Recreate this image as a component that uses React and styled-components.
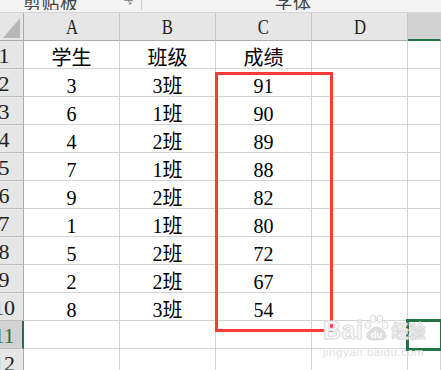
import React from "react";
import styled, { createGlobalStyle } from "styled-components";

const Global = createGlobalStyle`
  html, body { margin: 0; padding: 0; background: #fff; overflow: hidden; }
  body { width: 441px; height: 370px; }
`;

const Page = styled.div`
  width: 441px;
  height: 370px;
  overflow: hidden;
  display: flex;
  flex-direction: column;
`;

const Ribbon = styled.div`
  height: 12px;
  flex: none;
  background: #f3f3f3;
  border-bottom: 1px solid #d6d6d6;
  display: flex;
  overflow: hidden;
`;

const RibbonGroup = styled.div`
  width: ${(p) => p.$w}px;
  flex: none;
  display: flex;
  align-items: flex-end;
  justify-content: ${(p) => (p.$center ? "center" : "flex-start")};
  padding-left: ${(p) => p.$pl || 0}px;
  box-sizing: border-box;
  border-right: ${(p) => (p.$sep ? "1px solid #c9c9c9" : "none")};
  height: 10px;
  position: relative;
  overflow: hidden;
`;

const RibbonLabel = styled.span`
  font-family: "Noto Sans CJK SC", "Liberation Sans", sans-serif;
  font-size: 18px;
  line-height: 18px;
  color: #444;
  margin-bottom: -1px;
  letter-spacing: 0.5px;
`;

const Launcher = styled.svg`
  position: absolute;
  right: 8px;
  top: 0;
`;

const Sheet = styled.div`
  position: relative;
  flex: 1;
`;

const Grid = styled.div`
  display: grid;
  grid-template-columns: 24px 96px 96px 96px 96px 1fr;
  grid-auto-rows: 28px;
`;

const Corner = styled.div`
  background: #e6e6e6;
  border-right: 1px solid #ababab;
  border-bottom: 1px solid #ababab;
  box-sizing: border-box;
  display: flex;
  align-items: flex-end;
  justify-content: flex-end;
  padding: 0 3px 2px 0;
`;

const ColHead = styled.div`
  background: ${(p) => (p.$active ? "#d2d2d2" : "#e6e6e6")};
  border-right: 1px solid ${(p) => (p.$active ? "#d2d2d2" : "#c4c4c4")};
  border-bottom: ${(p) => (p.$active ? "2px solid #217346" : "1px solid #ababab")};
  box-sizing: border-box;
  display: flex;
  align-items: flex-end;
  justify-content: center;
  overflow: hidden;
`;

const ColLetter = styled.span`
  display: inline-block;
  font-family: "Liberation Serif", serif;
  font-size: 22px;
  line-height: 22px;
  color: #222;
  transform: scaleX(0.76);
  margin-bottom: 2px;
`;

const RowHead = styled.div`
  background: ${(p) => (p.$active ? "#d2d2d2" : "#e6e6e6")};
  border-right: ${(p) => (p.$active ? "2px solid #217346" : "1px solid #ababab")};
  border-bottom: 1px solid #bdbdbd;
  box-sizing: border-box;
  display: flex;
  align-items: flex-end;
  overflow: hidden;
  color: ${(p) => (p.$active ? "#217346" : "#222")};
`;

const RowNum = styled.span`
  flex: none;
  width: 38px;
  margin-left: -15px;
  text-align: center;
  font-family: "Liberation Serif", serif;
  font-size: 22px;
  line-height: 22px;
  margin-bottom: 1px;
`;

const Cell = styled.div`
  background: #fff;
  border-right: 1px solid #d4d4d4;
  border-bottom: 1px solid #d4d4d4;
  box-sizing: border-box;
  display: flex;
  align-items: flex-end;
  justify-content: center;
  font-family: "Liberation Serif", "Noto Sans CJK SC", serif;
  font-size: 20px;
  line-height: 20px;
  color: #000;
  position: relative;
  outline: ${(p) => (p.$selected ? "3px solid #217346" : "none")};
  outline-offset: -1px;
  z-index: ${(p) => (p.$selected ? 2 : "auto")};
`;

const RedBox = styled.div`
  position: absolute;
  left: 215px;
  top: 59px;
  width: 118px;
  height: 260px;
  border: 3px solid #fd3a3a;
  box-sizing: border-box;
  z-index: 3;
  pointer-events: none;
`;

const Watermark = styled.div`
  position: absolute;
  left: 323px;
  top: 301px;
  z-index: 4;
  display: flex;
  flex-direction: column;
  align-items: flex-start;
  pointer-events: none;
  font-family: "Liberation Sans", Arial, sans-serif;
`;

const MarkTop = styled.div`
  display: flex;
  align-items: flex-end;
  gap: 1px;
`;

const MarkWord = styled.span`
  font-size: 25px;
  font-weight: bold;
  line-height: 22px;
  color: #fbfbfb;
  -webkit-text-stroke: 1px #dadada;
  letter-spacing: ${(p) => p.$ls || 0}px;
`;

const MarkCjk = styled(MarkWord)`
  font-family: "Noto Sans CJK SC", sans-serif;
  font-size: 17px;
  line-height: 20px;
  margin-left: 1px;
  display: inline-block;
  transform: scaleY(1.1);
  transform-origin: bottom;
`;

const MarkUrl = styled.span`
  font-size: 11.5px;
  line-height: 12px;
  margin-top: 5px;
  margin-left: 0;
  color: #e0e0e0;
  letter-spacing: 0.5px;
`;

const rows = [
  ["学生", "班级", "成绩"],
  ["3", "3班", "91"],
  ["6", "1班", "90"],
  ["4", "2班", "89"],
  ["7", "1班", "88"],
  ["9", "2班", "82"],
  ["1", "1班", "80"],
  ["5", "2班", "72"],
  ["2", "2班", "67"],
  ["8", "3班", "54"],
  ["", "", ""],
  ["", "", ""],
  ["", "", ""],
];

function Paw() {
  return (
    <svg width="25" height="27" viewBox="0 0 26 27">
      <g fill="#fbfbfb" stroke="#d9d9d9" strokeWidth="1">
        <ellipse cx="4" cy="11" rx="3" ry="3.6" />
        <ellipse cx="9.5" cy="4.5" rx="3" ry="3.8" />
        <ellipse cx="16.5" cy="4.5" rx="3" ry="3.8" />
        <ellipse cx="22" cy="11" rx="3" ry="3.6" />
        <path d="M13 13 C8 13 3 19 3 22.5 C3 25.5 6 26.5 13 26.5 C20 26.5 23 25.5 23 22.5 C23 19 18 13 13 13 Z" fill="#dedede" />
      </g>
      <text x="13" y="24.5" textAnchor="middle" fontFamily="Liberation Sans, sans-serif" fontWeight="bold" fontSize="10" fill="#ffffff">du</text>
    </svg>
  );
}

export default function App() {
  return (
    <Page>
      <Global />
      <Ribbon>
        <RibbonGroup $w={142} $pl={23} $sep>
          <RibbonLabel>剪贴板</RibbonLabel>
          <Launcher width="9" height="6" viewBox="0 0 9 6">
            <path d="M0.5 0 V0.5 H8.5 V0" fill="none" stroke="#8a8a8a" strokeWidth="1" />
            <path d="M3 0 L7 4 M7 1.5 V4 H4.5" fill="none" stroke="#8a8a8a" strokeWidth="1" />
          </Launcher>
        </RibbonGroup>
        <RibbonGroup $w={302} $center>
          <RibbonLabel>字体</RibbonLabel>
        </RibbonGroup>
      </Ribbon>
      <Sheet>
        <Grid>
          <Corner>
            <svg width="17" height="20" viewBox="0 0 17 20">
              <path d="M0 20 L17 20 L17 0 Z" fill="#b7b7b7" />
            </svg>
          </Corner>
          {["A", "B", "C", "D", ""].map((c, i) => (
            <ColHead key={i} $active={i === 4}>
              <ColLetter>{c}</ColLetter>
            </ColHead>
          ))}
          {rows.map((r, ri) => (
            <React.Fragment key={ri}>
              <RowHead $active={ri === 10}>
                <RowNum>{ri + 1}</RowNum>
              </RowHead>
              {r.map((v, ci) => (
                <Cell key={ci}>{v}</Cell>
              ))}
              <Cell />
              <Cell $selected={ri === 10} />
            </React.Fragment>
          ))}
        </Grid>
        <RedBox />
        <Watermark>
          <MarkTop>
            <MarkWord $ls={0.5}>Bai</MarkWord>
            <Paw />
            <MarkCjk>经验</MarkCjk>
          </MarkTop>
          <MarkUrl>jingyan.baidu.com</MarkUrl>
        </Watermark>
      </Sheet>
    </Page>
  );
}
